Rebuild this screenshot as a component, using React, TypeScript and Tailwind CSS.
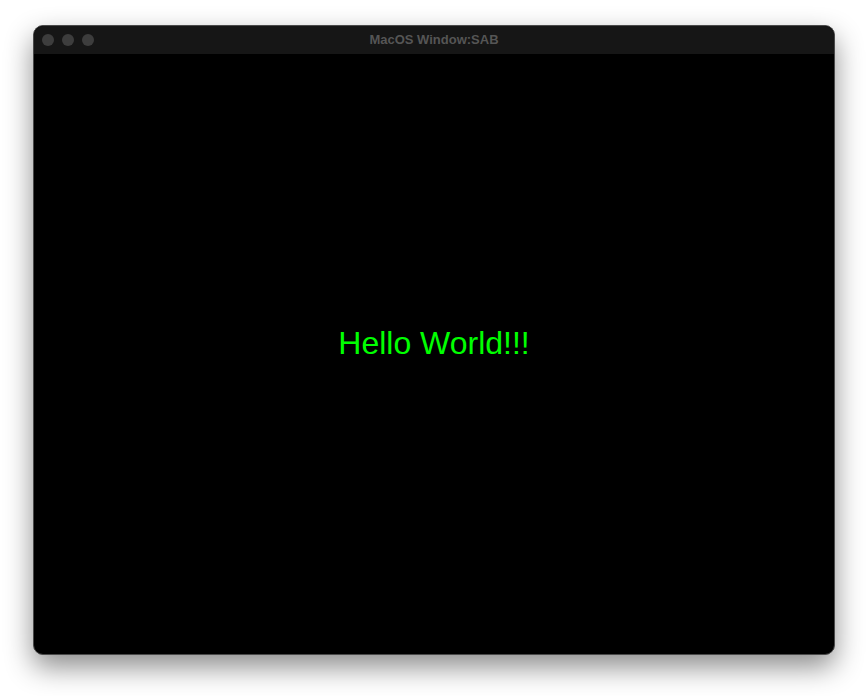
import React from 'react';

function TrafficLights() {
  return (
    <div className="absolute left-[8px] top-[8px] flex items-center gap-[8px]">
      <span className="w-[12px] h-[12px] rounded-full bg-[#3d3d3d]" />
      <span className="w-[12px] h-[12px] rounded-full bg-[#3d3d3d]" />
      <span className="w-[12px] h-[12px] rounded-full bg-[#3d3d3d]" />
    </div>
  );
}

export default function App() {
  return (
    <div className="w-[868px] h-[696px] bg-white pt-[25px] pl-[33px]">
      <div className="w-[802px] h-[630px] flex flex-col rounded-[10px] border border-[#4a4a4a] bg-black overflow-hidden shadow-[0_12px_28px_rgba(0,0,0,0.45)]">
        <div className="relative h-[28px] shrink-0 bg-[#161616] flex items-center justify-center">
          <TrafficLights />
          <span className="text-[13px] font-bold text-[#555555] font-['Liberation_Sans',Arial,sans-serif]">
            MacOS Window:SAB
          </span>
        </div>
        <div className="flex-1 flex items-center justify-center pb-[23px]">
          <span className="text-[32px] text-[#00ff00] font-['Liberation_Sans',Arial,sans-serif]">
            Hello World!!!
          </span>
        </div>
      </div>
    </div>
  );
}
